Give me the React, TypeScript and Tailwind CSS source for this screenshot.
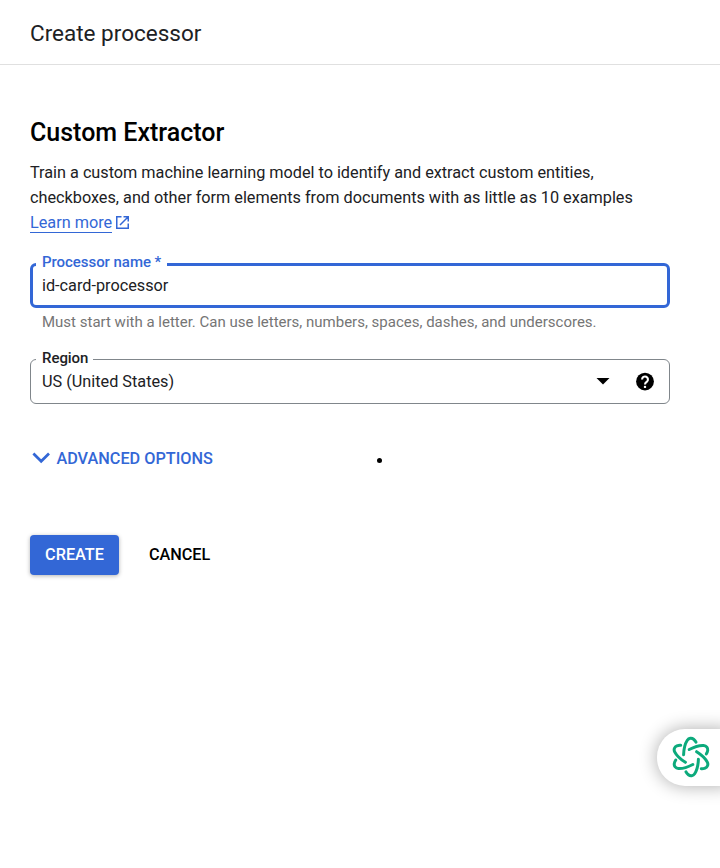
const PETALS = [0, 60, 120, 180, 240, 300];

function KnotLogo() {
  return (
    <svg width="42" height="42" viewBox="-21 -21 42 42" fill="none" stroke="#0caa7c" strokeWidth="3" strokeLinecap="round" strokeLinejoin="round">
      {PETALS.map((a) => (
        <path key={a} transform={`rotate(${a})`} d="M-7.4-2.2C-7.2-8-6-13.2-3.7-16.7C-2.1-19.1.7-19.3 2.6-17.8C3.7-16.9 4.5-15.9 5-14.8" />
      ))}
    </svg>
  );
}

export default function App() {
  return (
    <div className="relative h-[868px] w-[720px] overflow-hidden bg-white font-[Roboto,sans-serif] text-[#202124]">
      <header className="flex h-[65px] items-center border-b border-[#e0e0e0] px-[30px] pt-[2px]">
        <h1 className="text-[22.5px] leading-[30px]">Create processor</h1>
      </header>
      <main className="pt-[53px] pr-[50px] pl-[30px] text-[16.25px]">
        <h2 className="text-[25px] leading-[30px] font-medium text-black">Custom Extractor</h2>
        <p className="mt-[12px] leading-[25px] tracking-[-0.01px] whitespace-nowrap">
          Train a custom machine learning model to identify and extract custom entities,
          <br />
          checkboxes, and other form elements from documents with as little as 10 examples
        </p>
        <a className="flex h-[25px] items-start text-[#3367d6]">
          <span className="h-[23px] border-b border-[#3367d6] leading-[25px]">Learn more</span>
          <svg className="mt-[5px] ml-[3px]" width="15" height="15" viewBox="0 0 15 15" fill="none" stroke="currentColor" strokeWidth="1.5">
            <path d="M6.5 1.75H1.75V13.25H13.25V8.5M8.5 1.75H13.25V6.5M13 2L5 10" />
          </svg>
        </a>
        <div className="relative mt-[28px] flex h-[45px] items-center rounded-[6px] border-3 border-[#3367d6] px-[9px]">
          <span className="absolute -top-[14px] left-[3px] bg-white px-[6px] text-[15px] leading-[20px] font-medium tracking-[-0.05px] text-[#3367d6]">Processor name *</span>
          <span className="leading-[24px]">id-card-processor</span>
        </div>
        <p className="mt-[4px] ml-[12px] text-[15px] leading-[20px] text-[#757575]">
          Must start with a letter. Can use letters, numbers, spaces, dashes, and underscores.
        </p>
        <div className="relative mt-[27px] flex h-[45px] items-center rounded-[6px] border border-[#80868b] px-[11px]">
          <span className="absolute -top-[12px] left-[5px] bg-white pr-[5px] pl-[6px] text-[15px] leading-[20px] font-medium tracking-[-0.05px]">Region</span>
          <span className="flex-1 leading-[24px]">US (United States)</span>
          <svg width="14" height="7" viewBox="0 0 14 7" fill="#000"><path d="M.5 0h13L7 6.5z" /></svg>
          <svg className="mr-[2px] ml-[24px]" width="22" height="22" viewBox="0 0 24 24" fill="#000">
            <circle cx="12" cy="11.5" r="9.7" />
            <path d="M8.8 9.2a3.2 3.2 0 1 1 5.3 2.4C12.8 12.6 12 13.2 12 14.7" fill="none" stroke="#fff" strokeWidth="2.3" />
            <path d="M10.8 16.2h2.4v2.3h-2.4z" fill="#fff" />
          </svg>
        </div>
        <button className="mt-[45px] flex h-[20px] items-center font-medium text-[#3367d6]">
          <svg className="mr-[6px] mb-[2px] ml-[2px]" width="18.4" height="12" viewBox="0 0 18 12" fill="none" stroke="currentColor" strokeWidth="2.7"><path d="M1.2 1.5L9 9.3L16.8 1.5" /></svg>
          ADVANCED OPTIONS
        </button>
        <div className="mt-[66px] flex items-center gap-[30px] font-medium">
          <button className="h-[40px] w-[89px] rounded-[4px] bg-[#3367d6] text-white shadow-[0_1px_4px_rgba(0,0,0,0.3)]">CREATE</button>
          <button className="tracking-[-0.05px] text-black">CANCEL</button>
        </div>
      </main>
      <span className="absolute top-[458px] left-[377px] size-[5px] rounded-full bg-black" />
      <div className="absolute top-[729px] left-[657px] h-[57px] w-[73px] rounded-l-[28px] bg-white pt-[7px] pl-[13px] shadow-[0_0_18px_rgba(0,0,0,0.33)]">
        <KnotLogo />
      </div>
    </div>
  );
}
